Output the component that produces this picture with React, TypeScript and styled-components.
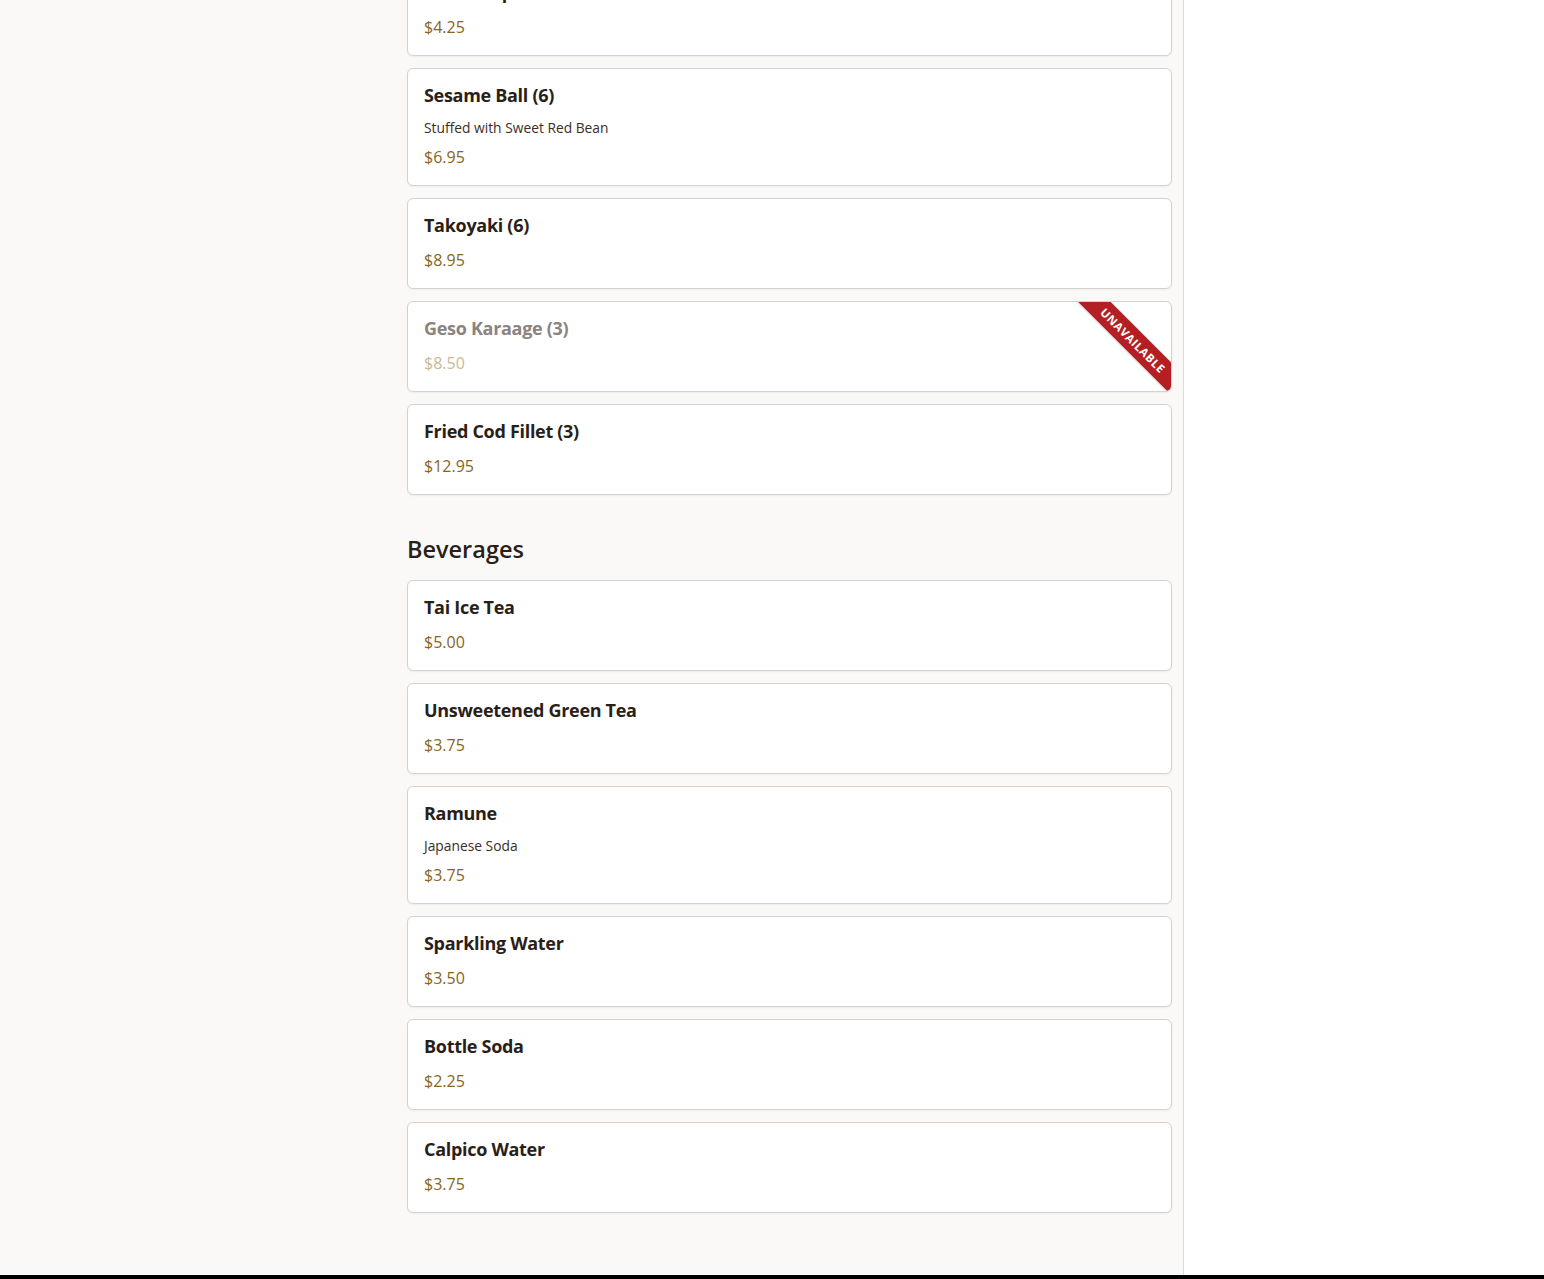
import React from "react";
import styled, { createGlobalStyle } from "styled-components";

const Global = createGlobalStyle`
  html, body { margin: 0; padding: 0; background: #ffffff; }
  body { font-family: "Open Sans", "Noto Sans", "Liberation Sans", sans-serif; }
  * { box-sizing: border-box; }
`;

const Page = styled.div`
  display: grid;
  grid-template-rows: 1fr 4px;
  height: 1279px;
  overflow: hidden;
`;

const Body = styled.div`
  display: grid;
  grid-template-columns: 1184px 1fr;
  min-height: 0;
`;

const Main = styled.main`
  background: #faf9f7;
  border-right: 1px solid #dedbd7;
  padding: 0 11px 0 407px;
  overflow: hidden;
`;

const Aside = styled.aside`
  background: #ffffff;
`;

const Footer = styled.footer`
  background: #000000;
`;

const Scroller = styled.div`
  margin-top: -35px;
  display: flex;
  flex-direction: column;
  gap: 40px;
`;

const Section = styled.section`
  display: flex;
  flex-direction: column;
`;

const SectionTitle = styled.h2`
  margin: 0 0 16px;
  font-size: 23.5px;
  line-height: 29px;
  font-weight: 600;
  color: #2a1e18;
`;

const List = styled.div`
  display: flex;
  flex-direction: column;
  gap: 12px;
`;

const Card = styled.div`
  position: relative;
  overflow: hidden;
  background: #ffffff;
  border: 1px solid #d5d1cd;
  border-radius: 6px;
  box-shadow: 0 1px 2px rgba(60, 40, 30, 0.06);
  padding: 16px;
`;

const Name = styled.div<{ $off?: boolean }>`
  font-size: 18px;
  line-height: 21px;
  font-weight: 700;
  letter-spacing: -0.3px;
  color: ${(p) => (p.$off ? "#8b8380" : "#2a1e18")};
  margin-bottom: 12px;
`;

const Desc = styled.div`
  font-size: 13.8px;
  line-height: 19px;
  color: #3b2d26;
  margin-bottom: 8px;
`;

const Price = styled.div<{ $off?: boolean }>`
  font-size: 16px;
  line-height: 24px;
  color: ${(p) => (p.$off ? "#cbb894" : "#86661c")};
`;

const Ribbon = styled.span`
  position: absolute;
  top: 27px;
  right: -37px;
  width: 150px;
  height: 23px;
  background: #b31f22;
  color: #ffffff;
  font-size: 11.5px;
  font-weight: 700;
  letter-spacing: 0.5px;
  line-height: 23px;
  text-align: center;
  text-transform: uppercase;
  transform: rotate(45deg);
  box-shadow: 0 1px 2px rgba(0, 0, 0, 0.15);
`;

type Item = { name: string; price: string; desc?: string; off?: boolean };

const appetizers: Item[] = [
  { name: "Miso Soup", price: "$4.25" },
  { name: "Sesame Ball (6)", price: "$6.95", desc: "Stuffed with Sweet Red Bean" },
  { name: "Takoyaki (6)", price: "$8.95" },
  { name: "Geso Karaage (3)", price: "$8.50", off: true },
  { name: "Fried Cod Fillet (3)", price: "$12.95" },
];

const beverages: Item[] = [
  { name: "Tai Ice Tea", price: "$5.00" },
  { name: "Unsweetened Green Tea", price: "$3.75" },
  { name: "Ramune", price: "$3.75", desc: "Japanese Soda" },
  { name: "Sparkling Water", price: "$3.50" },
  { name: "Bottle Soda", price: "$2.25" },
  { name: "Calpico Water", price: "$3.75" },
];

function MenuCard({ item }: { item: Item }) {
  return (
    <Card>
      <Name $off={item.off}>{item.name}</Name>
      {item.desc && <Desc>{item.desc}</Desc>}
      <Price $off={item.off}>{item.price}</Price>
      {item.off && <Ribbon>Unavailable</Ribbon>}
    </Card>
  );
}

export default function App() {
  return (
    <>
      <Global />
      <Page>
        <Body>
          <Main>
            <Scroller>
              <Section>
                <List>
                  {appetizers.map((i) => (
                    <MenuCard key={i.name} item={i} />
                  ))}
                </List>
              </Section>
              <Section>
                <SectionTitle>Beverages</SectionTitle>
                <List>
                  {beverages.map((i) => (
                    <MenuCard key={i.name} item={i} />
                  ))}
                </List>
              </Section>
            </Scroller>
          </Main>
          <Aside />
        </Body>
        <Footer />
      </Page>
    </>
  );
}
